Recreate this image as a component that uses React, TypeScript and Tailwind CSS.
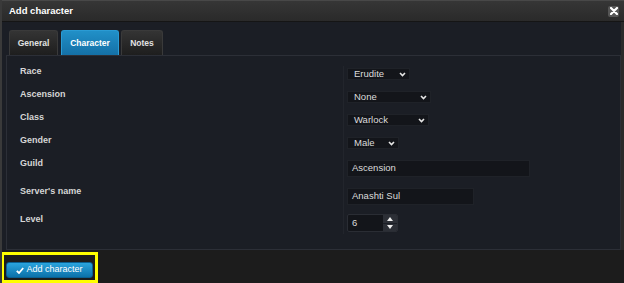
import React from "react";

const Chevron = () => (
  <svg width="7" height="5" viewBox="0 0 7 5" className="shrink-0">
    <polyline points="1,1 3.5,3.5 6,1" fill="none" stroke="#e6e6e6" strokeWidth="1.6" />
  </svg>
);

function Select({ value, w }: { value: string; w: string }) {
  return (
    <div className={`${w} h-[12px] bg-[#13151a] border border-[#1f2228] flex items-center justify-between pl-[6px] pr-[3px] text-[9.5px] leading-[10px] text-[#dcdcdc]`}>
      <span>{value}</span>
      <Chevron />
    </div>
  );
}

function Input({ value, w }: { value: string; w: string }) {
  return (
    <div className={`${w} h-[17px] bg-[#13151a] border border-[#1f2228] flex items-center pl-[4px] text-[9.5px] text-[#dcdcdc]`}>
      {value}
    </div>
  );
}

function Row({ label, h, children, lpt = "pt-0" }: { label: string; h: string; children: React.ReactNode; lpt?: string }) {
  return (
    <div className={`flex ${h}`}>
      <div className={`w-[330px] shrink-0 pl-[7px] ${lpt} text-[9px] leading-[10px] font-bold text-[#d6d6d6]`}>{label}</div>
      <div className="flex-1 border-l border-[#22252c] pl-[3px] pt-[2px]">{children}</div>
    </div>
  );
}

export default function App() {
  return (
    <div className="w-[624px] h-[283px] bg-[#1c1c1c] border-l-2 border-[#3a3a3a] overflow-hidden flex flex-col" style={{ fontFamily: '"Liberation Sans", Arial, sans-serif' }}>
      {/* Title bar */}
      <div className="h-[22px] shrink-0 bg-gradient-to-b from-[#363636] to-[#2a2a2a] border-t border-[#484848] border-b border-b-[#151515] flex items-center justify-between pl-[7px] pr-[5px]">
        <span className="text-[9.5px] font-bold text-white">Add character</span>
        <div className="w-[11px] h-[11px] rounded-[2px] bg-[#555555] flex items-center justify-center">
          <svg width="8" height="8" viewBox="0 0 8 8">
            <path d="M1 1 L7 7 M7 1 L1 7" stroke="#ffffff" strokeWidth="2.2" strokeLinecap="round" />
          </svg>
        </div>
      </div>

      {/* Body */}
      <div className="h-[228px] shrink-0 bg-[#1b1e25] pt-[7px] pl-[4px] border-r-[3px] border-[#2a2a2a]">
        {/* Tabs */}
        <div className="flex items-end pl-[3px] h-[26px]">
          <div className="w-[49px] h-[25px] rounded-t-[3px] bg-gradient-to-b from-[#343434] to-[#1e1e1e] border border-b-0 border-[#3a3a3a] flex items-center justify-center text-[8.5px] font-bold text-[#e2e2e2]">General</div>
          <div className="ml-[3px] w-[58px] h-[25px] rounded-t-[3px] bg-gradient-to-b from-[#2190c8] to-[#1470a6] border border-b-0 border-[#2a9bd4] flex items-center justify-center text-[8.5px] font-bold text-white">Character</div>
          <div className="ml-[2px] w-[42px] h-[25px] rounded-t-[3px] bg-gradient-to-b from-[#343434] to-[#1e1e1e] border border-b-0 border-[#3a3a3a] flex items-center justify-center text-[8.5px] font-bold text-[#e2e2e2]">Notes</div>
        </div>
        {/* Panel */}
        <div className="w-[615px] h-[195px] border border-[#2c2f37] pt-[10px] pl-[6px]">
          <Row label="Race" h="h-[23px]"><Select value="Erudite" w="w-[63px]" /></Row>
          <Row label="Ascension" h="h-[23px]"><Select value="None" w="w-[84px]" /></Row>
          <Row label="Class" h="h-[23px]"><Select value="Warlock" w="w-[82px]" /></Row>
          <Row label="Gender" h="h-[23px]"><Select value="Male" w="w-[52px]" /></Row>
          <Row label="Guild" h="h-[28px]"><Input value="Ascension" w="w-[183px]" /></Row>
          <Row label="Server's name" h="h-[26px]"><Input value="Anashti Sul" w="w-[127px]" /></Row>
          <Row label="Level" h="h-[22px]" lpt="pt-[2px]">
            <div className="w-[51px] h-[18px] rounded-[2px] bg-[#13151a] border border-[#2a2d34] flex overflow-hidden">
              <div className="flex-1 flex items-center pl-[4px] text-[9.5px] text-[#dcdcdc]">6</div>
              <div className="w-[14px] flex flex-col bg-[#2c2f36]">
                <div className="flex-1 flex items-center justify-center border-b border-[#1b1e25]">
                  <svg width="6" height="4" viewBox="0 0 6 4"><path d="M0 4 L3 0 L6 4 Z" fill="#eeeeee" /></svg>
                </div>
                <div className="flex-1 flex items-center justify-center">
                  <svg width="6" height="4" viewBox="0 0 6 4"><path d="M0 0 L3 4 L6 0 Z" fill="#eeeeee" /></svg>
                </div>
              </div>
            </div>
          </Row>
        </div>
      </div>

      {/* Footer */}
      <div className="flex-1 bg-[#1c1c1c] pt-[2px] -ml-[1px]">
        <div className="w-[97px] h-[31px] border-[3px] border-[#ffff00] pt-[7px] pl-[2px]">
          <div className="w-[87px] h-[16px] rounded-[3px] bg-gradient-to-b from-[#2aa4dd] to-[#0b72aa] border border-[#0a5f90] flex items-center justify-center gap-[2px] text-[9px] text-white">
            <svg width="8" height="7" viewBox="0 0 8 7"><path d="M0.8 3.8 L3 6 L7.2 1" fill="none" stroke="#ffffff" strokeWidth="1.8" /></svg>
            <span>Add character</span>
          </div>
        </div>
      </div>
    </div>
  );
}
